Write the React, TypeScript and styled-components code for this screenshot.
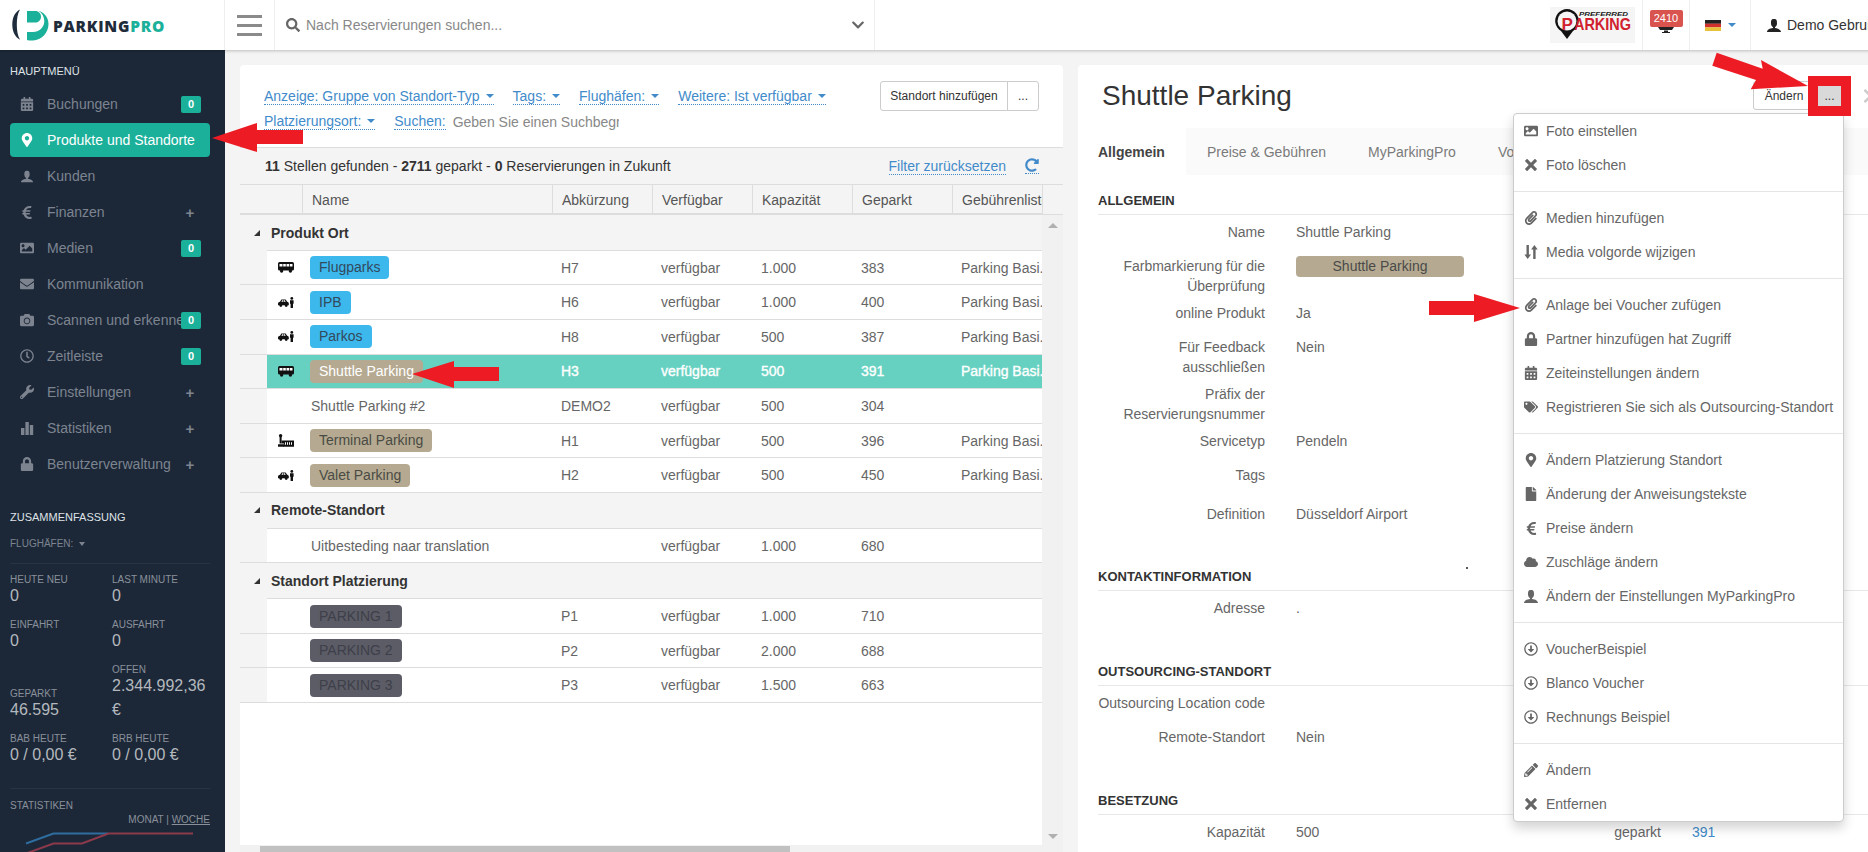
import React from "react";
import styled, { createGlobalStyle } from "styled-components";
import {
  FaCalendarAlt, FaMapMarkerAlt, FaEuroSign, FaImage, FaEnvelope, FaCamera, FaRegClock,
  FaWrench, FaLock, FaPaperclip, FaTags, FaFile, FaCloud, FaPencilAlt,
  FaRegArrowAltCircleDown, FaRedoAlt, FaSearch, FaChevronDown, FaChevronRight,
} from "react-icons/fa";
import { ImCross, ImUser } from "react-icons/im";

const Global = createGlobalStyle`
  html, body { margin: 0; padding: 0; overflow: hidden; background: #f4f4f4; }
  body { font-family: "Liberation Sans", Arial, sans-serif; font-size: 14px; color: #666; }
  * { box-sizing: border-box; }
`;

const Page = styled.div`
  position: relative; width: 1868px; height: 852px; overflow: hidden;
  display: flex; flex-direction: column; align-items: flex-start; background: #f4f4f4;
`;

/* ---------- header ---------- */
const Header = styled.header`
  position: relative; z-index: 2; width: 1900px; height: 50px; flex: none; display: flex;
  background: #fff; box-shadow: 0 1px 3px rgba(0,0,0,.22);
`;
const HeaderCell = styled.div<{ $w?: number; $grow?: boolean }>`
  width: ${p => (p.$w ? `${p.$w}px` : "auto")}; flex: ${p => (p.$grow ? "1" : "none")};
  height: 50px; display: flex; align-items: center; border-right: 1px solid #eee;
`;
const BrandCell = styled(HeaderCell)`padding-left: 12px; gap: 4px;`;
const BrandText = styled.span`
  font-family: "Open Sans", sans-serif; font-weight: 800; font-size: 15.5px; color: #1f2c3c; letter-spacing: .75px; margin-top: 1px;
`;
const BrandAccent = styled.span`color: #1ab09a;`;
const Burger = styled(HeaderCell)`flex-direction: column; justify-content: center; gap: 6px;`;
const BurgerBar = styled.span`width: 25px; height: 3px; background: #8a8a8a;`;
const SearchCell = styled(HeaderCell)`padding: 0 9px 0 11px; color: #666; font-size: 14px; gap: 6px;`;
const SearchHint = styled.span`flex: 1; color: #888;`;
const Spacer = styled.div`flex: 1;`;
const CenterCell = styled(HeaderCell)`justify-content: center;`;
const NoticeStack = styled.div`display: flex; flex-direction: column; align-items: center; margin-top: -6px;`;
const NoticeBadge = styled.span`
  width: 33px; height: 17px; border-radius: 2px; background: #d9534f; color: #fff;
  font-size: 11px; line-height: 17px; text-align: center;
`;
const LangCaret = styled.span`
  margin-left: 7px; border-left: 4px solid transparent; border-right: 4px solid transparent; border-top: 4px solid #428bca;
`;
const UserCell = styled.div`
  flex: none; width: 149px; padding-left: 15px; display: flex; align-items: center; gap: 5px; color: #333; font-size: 14px; white-space: nowrap;
`;

/* ---------- shell ---------- */
const Main = styled.div`flex: 1; display: flex; width: 1900px; min-height: 0;`;
const Content = styled.main`flex: 1; display: flex; gap: 15px; padding: 15px 0 0 15px; min-height: 0;`;

/* ---------- sidebar ---------- */
const Sidebar = styled.aside`
  width: 225px; flex: none; background: #1c2838; padding: 14px 15px 0 10px; overflow: hidden; color: #7d8490;
`;
const SideTitle = styled.div`color: #dfe2e6; font-size: 11px; line-height: 14px; margin-bottom: 9px;`;
const SideItem = styled.div<{ $active?: boolean }>`
  height: 34px; margin-bottom: 2px; padding-left: 10px; display: flex; align-items: center; gap: 13px;
  border-radius: 4px; font-size: 14px; white-space: nowrap;
  background: ${p => (p.$active ? "#1ab09a" : "transparent")};
  color: ${p => (p.$active ? "#fff" : "#7d8490")};
`;
const SideIcon = styled.span`width: 14px; flex: none; display: flex; justify-content: center; font-size: 14px;`;
const SideLabel = styled.span`flex: 1; min-width: 0; overflow: hidden;`;
const SideBadge = styled.span`
  flex: none; width: 20px; height: 17px; margin: 0 9px 0 -13px; border-radius: 2px; background: #1ab09a; color: #fff;
  font-size: 11px; font-weight: 700; line-height: 17px; text-align: center;
`;
const SidePlus = styled.span`flex: none; width: 10px; margin-right: 15px; font-size: 15px; font-weight: 700; text-align: center;`;
const SummaryTitle = styled(SideTitle)`margin: 29px 0 13px;`;
const SideSmall = styled.div`font-size: 10px; line-height: 14px; display: flex; align-items: center; gap: 6px;`;
const SmallCaret = styled.span`
  border-left: 3.5px solid transparent; border-right: 3.5px solid transparent; border-top: 4px solid #7d8490;
`;
const SideRule = styled.div<{ $top: number }>`height: 1px; background: #273445; margin-top: ${p => p.$top}px;`;
const StatGrid = styled.div`display: grid; grid-template-columns: 98px 98px; column-gap: 4px; row-gap: 10px; margin-top: 9px;`;
const Stat = styled.div`align-self: end;`;
const StatLabel = styled.div`font-size: 10px; line-height: 13px; color: #8a909a;`;
const StatValue = styled.div`font-size: 16px; line-height: 24px; margin-top: -2px; color: #b4b8be;`;
const ChartHead = styled.div`font-size: 10px; line-height: 13px; margin-top: 10px; color: #8a909a;`;
const ChartSwitch = styled.div`font-size: 10px; line-height: 13px; margin-top: 1px; text-align: right; color: #8a909a;`;
const ChartLink = styled.span`text-decoration: underline;`;
const ChartSvg = styled.svg`display: block; margin-top: 6px; overflow: visible;`;

/* ---------- left card ---------- */
const Card = styled.section<{ $w: number }>`
  position: relative; width: ${p => p.$w}px; flex: none; background: #fff; border-radius: 4px 4px 0 0; display: flex; flex-direction: column;
`;
const FilterBar = styled.div`
  height: 83px; flex: none; display: flex; justify-content: space-between; padding: 16px 24px 0; border-bottom: 1px solid #ddd;
`;
const FilterRows = styled.div`display: flex; flex-direction: column; gap: 7px; padding-top: 6px;`;
const FilterRow = styled.div`display: flex; gap: 19px; align-items: flex-end; height: 18px;`;
const Dotted = styled.span`
  color: #428bca; border-bottom: 1px dotted #428bca; line-height: 16px; white-space: nowrap; display: inline-flex; align-items: center;
`;
const Caret = styled.span`
  margin-left: 6px; border-left: 4px solid transparent; border-right: 4px solid transparent; border-top: 4px solid #428bca;
`;
const Hint = styled.span`
  width: 170px; margin-left: -16px; padding-left: 4px; overflow: hidden; white-space: nowrap; color: #888; line-height: 16px;
`;
const BtnGroup = styled.div`display: flex; height: 30px;`;
const GhostBtn = styled.button<{ $wide?: boolean }>`
  height: 30px; padding: 0; width: ${p => (p.$wide ? "128px" : "32px")}; background: #fff; border: 1px solid #ccc;
  border-radius: ${p => (p.$wide ? "3px 0 0 3px" : "0 3px 3px 0")}; margin-left: ${p => (p.$wide ? "0" : "-1px")};
  font: 12px "Liberation Sans", Arial, sans-serif; color: #333;
`;
const InfoBand = styled.div`
  height: 36px; flex: none; background: #f4f4f4; display: flex; align-items: center; justify-content: space-between; padding: 0 24px 0 25px; color: #333; font-size: 14px;
`;
const BandRight = styled.div`display: flex; align-items: center; gap: 19px;`;
const RefreshLink = styled(Dotted)`padding-bottom: 1px; font-size: 14px;`;
const HeadRow = styled.div`
  height: 31px; flex: none; display: grid; grid-template-columns: 62px 250px 100px 100px 100px 100px 90px 21px;
  background: #f4f4f4; border-top: 1px solid #ddd; color: #555;
`;
const HeadCell = styled.div<{ $plain?: boolean }>`
  display: flex; align-items: center; padding: 2px 0 0 9px; overflow: hidden; white-space: nowrap;
  border-left: ${p => (p.$plain ? "0" : "1px solid #ddd")};
  border-bottom: 2px solid #ddd;
`;
const HeadTail = styled.div`border-left: 1px solid #ddd; border-bottom: 1px solid #ddd;`;
const ListBody = styled.div`flex: 1; min-height: 0; display: flex;`;
const TableArea = styled.div`flex: 1; min-width: 0; overflow: hidden;`;
const GroupRow = styled.div`
  height: 35px; background: #f4f4f4; display: flex; align-items: center; padding-left: 14px; gap: 11px;
  font-weight: 700; color: #333;
`;
const GroupMark = styled.span`
  width: 0; height: 0; border-style: solid; border-width: 0 0 6px 6px; border-color: transparent transparent #333 transparent;
`;
const Row = styled.div<{ $first?: boolean }>`height: ${p => (p.$first ? 35.4 : 34.6)}px; display: flex; border-bottom: 1px solid #ddd;`;
const Gutter = styled.div`width: 27px; flex: none; background: #f4f4f4;`;
const Cells = styled.div<{ $active?: boolean; $first?: boolean }>`
  flex: 1; display: grid; grid-template-columns: 35px 250px 100px 100px 100px 100px 90px; align-items: center;
  padding-top: ${p => (p.$first ? 1 : 0)}px;
  background: ${p => (p.$active ? "#66d1c1" : "#fff")};
  color: ${p => (p.$active ? "#fff" : "#666")};
  -webkit-text-stroke: ${p => (p.$active ? ".35px #fff" : "0")};
  box-shadow: ${p => (p.$first ? "inset 0 1px 0 #ddd" : "none")};
`;
const IconCell = styled.div`display: flex; justify-content: center; padding-left: 2px;`;
const Cell = styled.div`padding-left: 9px; overflow: hidden; white-space: nowrap;`;
const Pill = styled.span<{ $bg: string; $fg: string }>`
  display: inline-block; height: 23px; line-height: 23px; padding: 0 9px; margin-left: -1px; border-radius: 4px;
  background: ${p => p.$bg}; color: ${p => p.$fg}; -webkit-text-stroke: 0;
`;
const VScroll = styled.div`
  width: 21px; flex: none; background: #f1f1f1; display: flex; flex-direction: column; align-items: center; justify-content: space-between; padding: 8px 0 6px;
`;
const ScrollUp = styled.span`border-left: 5px solid transparent; border-right: 5px solid transparent; border-bottom: 5px solid #b0b0b0;`;
const ScrollDown = styled.span`border-left: 5px solid transparent; border-right: 5px solid transparent; border-top: 5px solid #b0b0b0;`;
const HScroll = styled.div`height: 7px; flex: none; background: #f1f1f1; padding: 1px 273px 0 20px;`;
const HThumb = styled.div`height: 6px; background: #c1c1c1;`;

/* ---------- right card ---------- */
const TitleRow = styled.div`display: flex; align-items: center; padding: 16px 4px 0 24px; height: 45px; flex: none;`;
const Title = styled.h1`flex: 1; margin: 0; font-size: 28px; line-height: 30px; font-weight: 400; color: #333;`;
const Actions = styled.div`position: relative; display: flex; align-items: center;`;
const EditBtn = styled.button`
  width: 65px; height: 29px; padding: 0 3px 0 0; text-align: center; background: #fff; border: 1px solid #ccc; border-radius: 3px 0 0 3px;
  font: 12px "Liberation Sans", Arial, sans-serif; color: #333;
`;
const MoreBtn = styled.button`
  position: relative; z-index: 6; width: 23px; height: 20px; padding: 0; background: #d9d9d9; border: 0;
  box-shadow: 0 0 0 10px #ed1c24; font: 12px "Liberation Sans", Arial, sans-serif; color: #333;
`;
const CloseChevron = styled.span`margin-left: 21px; color: #ccc; font-size: 12px; display: flex; width: 12px;`;
const Tabs = styled.nav`margin-top: 18px; height: 47px; flex: none; display: flex; background: #fafafa;`;
const Tab = styled.div<{ $active?: boolean; $gap?: number }>`
  display: flex; align-items: center; padding: 0 21px 0 ${p => (p.$active ? 20 : 21)}px; white-space: nowrap;
  margin-right: ${p => p.$gap || 0}px;
  background: ${p => (p.$active ? "#fff" : "transparent")};
  color: ${p => (p.$active ? "#444" : "#7a7a7a")};
  font-weight: ${p => (p.$active ? 700 : 400)};
`;
const Section = styled.div<{ $top: number }>`margin: ${p => p.$top}px 0 0 20px;`;
const SectionHead = styled.h2`
  margin: 0 0 7px; font-size: 13px; line-height: 18px; font-weight: 700; color: #333; padding: 1px 0 4px; border-bottom: 1px solid #e7e7e7;
`;
const InfoRow = styled.div<{ $tall?: boolean }>`
  display: grid; grid-template-columns: 167px 167px 167px 167px; column-gap: 31px;
  min-height: ${p => (p.$tall ? 39 : 34)}px; padding-bottom: 7px; line-height: 20px;
`;
const InfoLabel = styled.div`text-align: right;`;
const InfoValue = styled.div``;
const InfoLink = styled.a`color: #428bca;`;
const WidePill = styled.div`
  width: 168px; height: 21px; line-height: 21px; border-radius: 4px; background: #b5aa91; color: #4a4a4a; text-align: center;
`;
const Speck = styled.span`
  position: absolute; left: 388px; top: 502px; width: 2px; height: 2px; border-radius: 50%; background: #222;
`;

/* ---------- dropdown ---------- */
const Menu = styled.div`
  position: absolute; z-index: 5; top: calc(100% + 3px); right: -3px; width: 331px; padding: 0;
  background: #fff; border: 1px solid #ccc; border-radius: 4px; box-shadow: 0 6px 12px rgba(0,0,0,.175);
`;
const MenuItem = styled.div`
  height: 34px; display: flex; align-items: center; gap: 7px; padding-left: 9px; color: #666; font-size: 14px; white-space: nowrap;
`;
const MenuIcon = styled.span`width: 16px; flex: none; display: flex; justify-content: center; font-size: 14px; color: #666;`;
const MenuRule = styled.div`height: 1px; margin: 9px 0; background: #e5e5e5;`;

const Annotations = styled.svg`position: absolute; left: 0; top: 0; z-index: 10; pointer-events: none;`;

/* ---------- drawn icons ---------- */
const Bars = () => (
  <svg width="14" height="14" viewBox="0 0 14 14" fill="currentColor"><rect x="1" y="7" width="3.4" height="7" /><rect x="5.4" y="1" width="3.4" height="13" /><rect x="9.8" y="4" width="3.4" height="10" /></svg>
);
const SortArrows = () => (
  <svg width="14" height="14" viewBox="0 0 14 14" fill="currentColor"><path d="M2.5 0h2.4v9.5H7L3.7 14 .4 9.5h2.1zM9.2 14h2.4V4.5h2.1L10.4 0 7.1 4.5h2.1z" /></svg>
);
const BusIcon = () => (
  <svg width="16" height="11" viewBox="0 0 16 11">
    <rect x="0" y="0" width="16" height="8.6" rx="1.6" fill="#111" />
    <path d="M1.5 2h3v2.6h-3zM5.2 2h2.6v2.6H5.2zM8.5 2h2.6v2.6H8.5zM11.8 2h2.7v2.6h-2.7z" fill="#fff" />
    <circle cx="3.6" cy="9" r="1.7" fill="#111" /><circle cx="12.4" cy="9" r="1.7" fill="#111" />
  </svg>
);
const ValetIcon = () => (
  <svg width="16" height="11" viewBox="0 0 16 11" fill="#111">
    <path d="M0 6.6C0 5.4 1 5 2 4.7L3.4 2.4h4.2L9.2 4.7C10 5 10.8 5.4 10.8 6.6v1.6H0z" />
    <circle cx="2.8" cy="8.6" r="1.4" /><circle cx="8.2" cy="8.6" r="1.4" />
    <path d="M4.2 3.2h1v1.6H3.4zM5.8 3.2h1l.9 1.6H5.8z" fill="#fff" />
    <circle cx="13.8" cy="1.4" r="1.4" /><path d="M12 3.2h3.6v3.6h-.6V11h-2.4V6.8H12z" />
  </svg>
);
const TerminalIcon = () => (
  <svg width="16" height="13" viewBox="0 0 16 13" fill="#111">
    <circle cx="2.6" cy="1.7" r="1.7" /><path d="M1.6 3h2v6.6H1.6zM0 10.2h6v2.6H0z" />
    <path d="M3.6 6.4H16v6.4H5.4V11h.7V9.4H3.6z" />
    <path d="M7 8.2h1v2.6H7zM9 8.2h1v2.6H9zM11 8.2h1v2.6h-1zM13 8.2h1v2.6h-1z" fill="#fff" />
  </svg>
);
const BrandMark = () => (
  <svg width="37" height="32" viewBox="0 0 37 32">
    <path d="M8 .5C3 3 .3 8.500 .3 15.500S3 28 8 30.800C5.500 26.500 4.800 21 4.800 15.500S5.500 4.500 8 .5z" fill="#1f2c3c" />
    <path d="M15 2h8.500c3 0 5.500 2.500 5.500 5.700s-2.500 5.800-5.500 5.800H15z" fill="#1ab09a" />
    <path d="M27 2c5.500 1.500 9.500 6.800 9.500 13 0 9-7 16-15.500 16.500-2 .1-4.500 0-6-.5v-8h6c6 0 11.300-4.500 11.300-10.700 0-4.300-2-8.300-5.800-10.300z" fill="#1ab09a" />
  </svg>
);
const PreferredLogo = () => (
  <svg width="85" height="36" viewBox="0 0 85 36">
    <rect width="85" height="36" fill="#f5f5f5" />
    <path d="M17 32l-6-8a11.800 11.800 0 1 1 12 0z" fill="#111" />
    <circle cx="17" cy="14" r="9.500" fill="#f5f5f5" />
    <text x="11.500" y="23" fontFamily="Liberation Sans" fontWeight="700" fontSize="17" fill="#d0202e">P</text>
    <text x="29" y="8.500" fontFamily="Liberation Sans" fontWeight="700" fontStyle="italic" fontSize="6" fill="#222" textLength="49" lengthAdjust="spacingAndGlyphs">PREFERRED</text>
    <text x="24" y="23" fontFamily="Liberation Sans" fontWeight="700" fontSize="17" fill="#d0202e" textLength="57" lengthAdjust="spacingAndGlyphs">ARKING</text>
  </svg>
);
const Monitor = () => (
  <svg width="16" height="7" viewBox="0 0 16 7" fill="#222"><path d="M0 0h16l-2 3H2zM6 3.500h4v1.500h2v1H4V5h2z" /></svg>
);
const Flag = () => (
  <svg width="16" height="11" viewBox="0 0 16 11"><rect width="16" height="3.800" fill="#222" /><rect y="3.700" width="16" height="3.700" fill="#d0312d" /><rect y="7.300" width="16" height="3.700" fill="#e8c23a" /></svg>
);

/* ---------- data ---------- */
type Nav = { icon: React.ReactNode; label: string; badge?: boolean; plus?: boolean; active?: boolean };
const nav: Nav[] = [
  { icon: <FaCalendarAlt />, label: "Buchungen", badge: true },
  { icon: <FaMapMarkerAlt />, label: "Produkte und Standorte", active: true },
  { icon: <ImUser size={16} />, label: "Kunden" },
  { icon: <FaEuroSign size={15} />, label: "Finanzen", plus: true },
  { icon: <FaImage />, label: "Medien", badge: true },
  { icon: <FaEnvelope />, label: "Kommunikation" },
  { icon: <FaCamera />, label: "Scannen und erkennen", badge: true },
  { icon: <FaRegClock />, label: "Zeitleiste", badge: true },
  { icon: <FaWrench />, label: "Einstellungen", plus: true },
  { icon: <Bars />, label: "Statistiken", plus: true },
  { icon: <FaLock />, label: "Benutzerverwaltung", plus: true },
];
const stats = [
  ["HEUTE NEU", "0"], ["LAST MINUTE", "0"], ["EINFAHRT", "0"], ["AUSFAHRT", "0"],
  ["GEPARKT", "46.595"], ["OFFEN", "2.344.992,36 €"], ["BAB HEUTE", "0 / 0,00 €"], ["BRB HEUTE", "0 / 0,00 €"],
];
const BLUE = { bg: "#3cb8ec", fg: "#33495c" };
const TAN = { bg: "#b5aa91", fg: "#4a4a44" };
const DARK = { bg: "#5b5c66", fg: "#3e3f49" };
type Item = { icon?: React.ReactNode; name: string; pill?: { bg: string; fg: string }; code: string; cap: string; parked: string; fee?: string; active?: boolean };
const FEE = "Parking Basi...";
const groups: { title: string; items: Item[] }[] = [
  { title: "Produkt Ort", items: [
    { icon: <BusIcon />, name: "Flugparks", pill: BLUE, code: "H7", cap: "1.000", parked: "383", fee: FEE },
    { icon: <ValetIcon />, name: "IPB", pill: BLUE, code: "H6", cap: "1.000", parked: "400", fee: FEE },
    { icon: <ValetIcon />, name: "Parkos", pill: BLUE, code: "H8", cap: "500", parked: "387", fee: FEE },
    { icon: <BusIcon />, name: "Shuttle Parking", pill: { bg: "#b5aa91", fg: "#fff" }, code: "H3", cap: "500", parked: "391", fee: FEE, active: true },
    { name: "Shuttle Parking #2", code: "DEMO2", cap: "500", parked: "304" },
    { icon: <TerminalIcon />, name: "Terminal Parking", pill: TAN, code: "H1", cap: "500", parked: "396", fee: FEE },
    { icon: <ValetIcon />, name: "Valet Parking", pill: TAN, code: "H2", cap: "500", parked: "450", fee: FEE },
  ]},
  { title: "Remote-Standort", items: [
    { name: "Uitbesteding naar translation", code: "", cap: "1.000", parked: "680" },
  ]},
  { title: "Standort Platzierung", items: [
    { name: "PARKING 1", pill: DARK, code: "P1", cap: "1.000", parked: "710" },
    { name: "PARKING 2", pill: DARK, code: "P2", cap: "2.000", parked: "688" },
    { name: "PARKING 3", pill: DARK, code: "P3", cap: "1.500", parked: "663" },
  ]},
];
const menu: [React.ReactNode, string][][] = [
  [[<FaImage />, "Foto einstellen"], [<ImCross size={12} />, "Foto löschen"]],
  [[<FaPaperclip />, "Medien hinzufügen"], [<SortArrows />, "Media volgorde wijzigen"]],
  [[<FaPaperclip />, "Anlage bei Voucher zufügen"], [<FaLock />, "Partner hinzufügen hat Zugriff"], [<FaCalendarAlt />, "Zeiteinstellungen ändern"], [<FaTags />, "Registrieren Sie sich als Outsourcing-Standort"]],
  [[<FaMapMarkerAlt />, "Ändern Platzierung Standort"], [<FaFile />, "Änderung der Anweisungstekste"], [<FaEuroSign size={15} />, "Preise ändern"], [<FaCloud />, "Zuschläge ändern"], [<ImUser size={16} />, "Ändern der Einstellungen MyParkingPro"]],
  [[<FaRegArrowAltCircleDown />, "VoucherBeispiel"], [<FaRegArrowAltCircleDown />, "Blanco Voucher"], [<FaRegArrowAltCircleDown />, "Rechnungs Beispiel"]],
  [[<FaPencilAlt />, "Ändern"], [<ImCross size={12} />, "Entfernen"]],
];
const heads = ["Name", "Abkürzung", "Verfügbar", "Kapazität", "Geparkt", "Gebührenliste"];

export default function App() {
  return (
    <Page>
      <Global />
      <Header>
        <BrandCell $w={225}>
          <BrandMark />
          <BrandText>PARKING<BrandAccent>PRO</BrandAccent></BrandText>
        </BrandCell>
        <Burger $w={50}><BurgerBar /><BurgerBar /><BurgerBar /></Burger>
        <SearchCell $w={600}>
          <FaSearch size={14} />
          <SearchHint>Nach Reservierungen suchen...</SearchHint>
          <FaChevronDown size={14} />
        </SearchCell>
        <Spacer />
        <CenterCell $w={100}><PreferredLogo /></CenterCell>
        <CenterCell $w={47}>
          <NoticeStack><NoticeBadge>2410</NoticeBadge><Monitor /></NoticeStack>
        </CenterCell>
        <CenterCell $w={61}><Flag /><LangCaret /></CenterCell>
        <UserCell><ImUser size={16} color="#222" />Demo Gebruiker</UserCell>
      </Header>
      <Main>
        <Sidebar>
          <SideTitle>HAUPTMENÜ</SideTitle>
          {nav.map(n => (
            <SideItem key={n.label} $active={n.active}>
              <SideIcon>{n.icon}</SideIcon>
              <SideLabel>{n.label}</SideLabel>
              {n.badge && <SideBadge>0</SideBadge>}
              {n.plus && <SidePlus>+</SidePlus>}
            </SideItem>
          ))}
          <SummaryTitle>ZUSAMMENFASSUNG</SummaryTitle>
          <SideSmall>FLUGHÄFEN: <SmallCaret /></SideSmall>
          <SideRule $top={12} />
          <StatGrid>
            {stats.map(([l, v]) => (
              <Stat key={l}><StatLabel>{l}</StatLabel><StatValue>{v}</StatValue></Stat>
            ))}
          </StatGrid>
          <SideRule $top={21} />
          <ChartHead>STATISTIKEN</ChartHead>
          <ChartSwitch>MONAT | <ChartLink>WOCHE</ChartLink></ChartSwitch>
          <ChartSvg width="200" height="22" viewBox="0 0 200 22" fill="none" strokeWidth="2">
            <path d="M16 11.500L43.500 1.500H98" stroke="#2f6d9e" />
            <path d="M16 21.500L43.500 11.500H72L98.500 1.500H183" stroke="#8c3a4b" />
          </ChartSvg>
        </Sidebar>
        <Content>
          <Card $w={823}>
            <FilterBar>
              <FilterRows>
                <FilterRow>
                  <Dotted>Anzeige: Gruppe von Standort-Typ<Caret /></Dotted>
                  <Dotted>Tags:<Caret /></Dotted>
                  <Dotted>Flughäfen:<Caret /></Dotted>
                  <Dotted>Weitere: Ist verfügbar<Caret /></Dotted>
                </FilterRow>
                <FilterRow>
                  <Dotted>Platzierungsort:<Caret /></Dotted>
                  <Dotted>Suchen:</Dotted>
                  <Hint>Geben Sie einen Suchbegriff ein</Hint>
                </FilterRow>
              </FilterRows>
              <BtnGroup>
                <GhostBtn $wide>Standort hinzufügen</GhostBtn>
                <GhostBtn>...</GhostBtn>
              </BtnGroup>
            </FilterBar>
            <InfoBand>
              <span><b>11</b> Stellen gefunden - <b>2711</b> geparkt - <b>0</b> Reservierungen in Zukunft</span>
              <BandRight>
                <Dotted>Filter zurücksetzen</Dotted>
                <RefreshLink><FaRedoAlt size={14} /></RefreshLink>
              </BandRight>
            </InfoBand>
            <HeadRow>
              <HeadCell $plain />
              {heads.map(h => <HeadCell key={h}>{h}</HeadCell>)}
              <HeadTail />
            </HeadRow>
            <ListBody>
              <TableArea>
                {groups.map(g => (
                  <React.Fragment key={g.title}>
                    <GroupRow><GroupMark />{g.title}</GroupRow>
                    {g.items.map((it, i) => (
                      <Row key={it.name} $first={i === 0}>
                        <Gutter />
                        <Cells $active={it.active} $first={i === 0}>
                          <IconCell>{it.icon}</IconCell>
                          <Cell>{it.pill ? <Pill $bg={it.pill.bg} $fg={it.pill.fg}>{it.name}</Pill> : it.name}</Cell>
                          <Cell>{it.code}</Cell>
                          <Cell>verfügbar</Cell>
                          <Cell>{it.cap}</Cell>
                          <Cell>{it.parked}</Cell>
                          <Cell>{it.fee}</Cell>
                        </Cells>
                      </Row>
                    ))}
                  </React.Fragment>
                ))}
              </TableArea>
              <VScroll><ScrollUp /><ScrollDown /></VScroll>
            </ListBody>
            <HScroll><HThumb /></HScroll>
          </Card>
          <Card $w={800}>
            <TitleRow>
              <Title>Shuttle Parking</Title>
              <Actions>
                <EditBtn>Ändern</EditBtn>
                <MoreBtn>...</MoreBtn>
                <Menu>
                  {menu.map((group, gi) => (
                    <React.Fragment key={gi}>
                      {gi > 0 && <MenuRule />}
                      {group.map(([icon, label]) => (
                        <MenuItem key={label}><MenuIcon>{icon}</MenuIcon>{label}</MenuItem>
                      ))}
                    </React.Fragment>
                  ))}
                </Menu>
              </Actions>
              <CloseChevron><FaChevronRight size={16} /></CloseChevron>
            </TitleRow>
            <Tabs>
              <Tab $active>Allgemein</Tab>
              <Tab>Preise &amp; Gebühren</Tab>
              <Tab>MyParkingPro</Tab>
              <Tab $gap={205}>Voucher</Tab>
              <Tab>Medien</Tab>
            </Tabs>
            <Section $top={16}>
              <SectionHead>ALLGEMEIN</SectionHead>
              <InfoRow><InfoLabel>Name</InfoLabel><InfoValue>Shuttle Parking</InfoValue></InfoRow>
              <InfoRow><InfoLabel>Farbmarkierung für die Überprüfung</InfoLabel><InfoValue><WidePill>Shuttle Parking</WidePill></InfoValue></InfoRow>
              <InfoRow><InfoLabel>online Produkt</InfoLabel><InfoValue>Ja</InfoValue></InfoRow>
              <InfoRow><InfoLabel>Für Feedback ausschließen</InfoLabel><InfoValue>Nein</InfoValue></InfoRow>
              <InfoRow><InfoLabel>Präfix der Reservierungsnummer</InfoLabel><InfoValue /></InfoRow>
              <InfoRow><InfoLabel>Servicetyp</InfoLabel><InfoValue>Pendeln</InfoValue></InfoRow>
              <InfoRow $tall><InfoLabel>Tags</InfoLabel><InfoValue /></InfoRow>
              <InfoRow><InfoLabel>Definition</InfoLabel><InfoValue>Düsseldorf Airport</InfoValue></InfoRow>
            </Section>
            <Section $top={29}>
              <SectionHead>KONTAKTINFORMATION</SectionHead>
              <InfoRow><InfoLabel>Adresse</InfoLabel><InfoValue>.</InfoValue></InfoRow>
            </Section>
            <Section $top={30}>
              <SectionHead>OUTSOURCING-STANDORT</SectionHead>
              <InfoRow><InfoLabel>Outsourcing Location code</InfoLabel><InfoValue /></InfoRow>
              <InfoRow><InfoLabel>Remote-Standort</InfoLabel><InfoValue>Nein</InfoValue></InfoRow>
            </Section>
            <Section $top={30}>
              <SectionHead>BESETZUNG</SectionHead>
              <InfoRow>
                <InfoLabel>Kapazität</InfoLabel><InfoValue>500</InfoValue>
                <InfoLabel>geparkt</InfoLabel><InfoValue><InfoLink>391</InfoLink></InfoValue>
              </InfoRow>
            </Section>
            <Speck />
          </Card>
        </Content>
      </Main>
      <Annotations width="1868" height="852" viewBox="0 0 1868 852" fill="#ed1c24">
        <polygon points="212,138 257,123 257,130 303,130 303,144 257,144 257,152" />
        <polygon points="412,374 454,361 454,367 499,367 499,381 454,381 454,388" />
        <polygon points="1520,308 1474,294 1474,301 1429,301 1429,315 1474,315 1474,322" />
        <polygon points="1716.700,52.700 1762.700,68.700 1761,60 1808,86 1750.700,89.300 1756,80 1712.300,65.700" />
      </Annotations>
    </Page>
  );
}
